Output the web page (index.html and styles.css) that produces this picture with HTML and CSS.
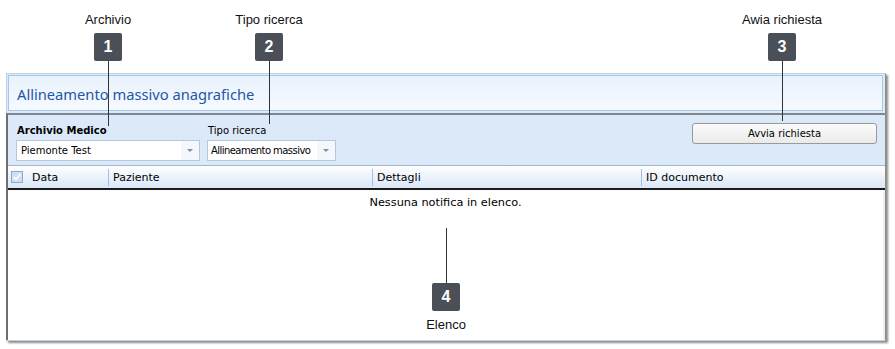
FILE: index.html
```html
<!DOCTYPE html>
<html lang="it">
<head>
    <meta charset="UTF-8">
    <title>Allineamento massivo anagrafiche</title>
    <link rel="stylesheet" href="styles.css">
</head>
<body>
    <div class="stage">
        <!-- Finestra -->
        <div class="window">
            <div class="titlebar">Allineamento massivo anagrafiche</div>
            <div class="panel">
                <!-- Barra filtri -->
                <div class="toolbar">
                    <div class="field field-archivio">
                        <label class="lbl lbl-bold">Archivio Medico</label>
                        <div class="combo">
                            <span class="combo-text">Piemonte Test</span>
                            <span class="combo-arrow"></span>
                        </div>
                    </div>
                    <div class="field field-tipo">
                        <label class="lbl">Tipo ricerca</label>
                        <div class="combo">
                            <span class="combo-text combo-text-tight">Allineamento massivo</span>
                            <span class="combo-arrow"></span>
                        </div>
                    </div>
                    <button class="btn">Avvia richiesta</button>
                </div>
                <!-- Elenco -->
                <div class="grid-head">
                    <div class="col col-check">
                        <svg width="12" height="12" viewBox="0 0 12 12">
                            <rect x="0.5" y="0.5" width="11" height="11" fill="#cfe0f3" stroke="#8fa9c8"/>
                            <path d="M2.5 6 L5 8.5 L9.5 3" fill="none" stroke="#ffffff" stroke-width="1.6"/>
                        </svg>
                    </div>
                    <div class="col col-data">Data</div>
                    <div class="col col-paz">Paziente</div>
                    <div class="col col-det">Dettagli</div>
                    <div class="col col-id">ID documento</div>
                </div>
                <div class="grid-body">
                    <div class="empty">Nessuna notifica in elenco.</div>
                </div>
            </div>
        </div>

        <!-- Richiami numerati -->
        <div class="callout c1"><span class="c-label">Archivio</span><span class="badge">1</span><span class="stem"></span></div>
        <div class="callout c2"><span class="c-label">Tipo ricerca</span><span class="badge">2</span><span class="stem"></span></div>
        <div class="callout c3"><span class="c-label">Awia richiesta</span><span class="badge">3</span><span class="stem"></span></div>
        <div class="callout c4"><span class="stem"></span><span class="badge">4</span><span class="c-label">Elenco</span></div>
    </div>
</body>
</html>
```

FILE: styles.css
```css
/* Pagina */
body {
    margin: 0;
    background: #ffffff;
    font-family: "DejaVu Sans", Tahoma, sans-serif;
}

.stage {
    position: relative;
    width: 895px;
    height: 349px;
    padding-top: 73px;
    box-sizing: border-box;
}

/* Finestra */
.window {
    margin-left: 6px;
    width: 880px;
    height: 268px;
    box-sizing: border-box;
    border: 1px solid #bcd3ec;
    border-right-color: #8c8c8c;
    background: #dfeaf8;
    box-shadow: 2px 2px 2px rgba(0, 0, 0, 0.45);
    display: flex;
    flex-direction: column;
}

.titlebar {
    margin: 1px 2px 1px 1px;
    height: 36px;
    box-sizing: border-box;
    border: 1px solid #a8c6e8;
    background: linear-gradient(#e9f2fc, #f6faff);
    font-family: "Noto Sans", "Open Sans", sans-serif;
    font-size: 14.7px;
    color: #1e56a8;
    padding-left: 8px;
    padding-top: 2px;
    line-height: 33px;
}

.panel {
    flex: 1;
    border-top: 2px solid #7e8791;
    border-left: 2px solid #6f6f6f;
    margin-left: -1px;
    margin-top: 1px;
    display: flex;
    flex-direction: column;
    background: #ffffff;
}

/* Barra filtri */
.toolbar {
    height: 50px;
    background: #dce9f9;
    display: flex;
    align-items: flex-start;
    padding-left: 8px;
    padding-right: 8px;
    font-size: 10px;
    color: #000;
}

.field {
    display: flex;
    flex-direction: column;
    margin-top: 8px;
}

.field-archivio { width: 184px; }
.field-tipo { width: 129px; margin-left: 7px; }

.lbl {
    height: 15px;
    line-height: 15px;
    padding-left: 1px;
}

.lbl-bold { font-weight: bold; }

.combo {
    margin-top: 2px;
    height: 21px;
    box-sizing: border-box;
    background: #fff;
    border: 1px solid #b5c8de;
    display: flex;
    align-items: center;
}

.combo-text {
    flex: 1;
    padding-left: 4px;
    white-space: nowrap;
    overflow: hidden;
}

.combo-text-tight {
    padding-left: 3px;
    letter-spacing: -0.55px;
}

.combo-arrow {
    width: 18px;
    height: 19px;
    position: relative;
    background: #f4f8fd;
}

.combo-arrow::after {
    content: "";
    position: absolute;
    left: 6px;
    top: 8px;
    border-left: 3px solid transparent;
    border-right: 3px solid transparent;
    border-top: 3px solid #7a8ea8;
}

.btn {
    margin-left: auto;
    margin-top: 8px;
    width: 185px;
    height: 21px;
    border: 1px solid #9a9a9a;
    border-radius: 3px;
    background: linear-gradient(#fbfbfb, #eaeaea);
    font-family: "DejaVu Sans", Tahoma, sans-serif;
    font-size: 10px;
    color: #000;
    padding: 0;
}

/* Intestazione elenco */
.grid-head {
    height: 25px;
    box-sizing: border-box;
    background: linear-gradient(#ffffff, #d9e7f8);
    border-top: 1px solid #9fb8d6;
    border-bottom: 2px solid #1b1b1b;
    display: flex;
    align-items: center;
    font-size: 11px;
    color: #000;
}

.col {
    height: 17px;
    line-height: 17px;
    padding-left: 4px;
    box-sizing: border-box;
    white-space: nowrap;
}

.col-check { width: 21px; padding-left: 3px; display: flex; align-items: center; }
.col-data { width: 79px; padding-left: 3px; }
.col-paz { width: 264px; border-left: 1px solid #9fc0e6; }
.col-det { width: 269px; border-left: 1px solid #9fc0e6; }
.col-id { flex: 1; border-left: 1px solid #9fc0e6; }

.grid-body {
    flex: 1;
    background: #fff;
    border-right: 2px solid #f0f0f0;
}

.empty {
    text-align: center;
    font-size: 11.3px;
    padding-top: 6px;
    color: #000;
}

/* Richiami */
.callout {
    position: absolute;
    display: flex;
    flex-direction: column;
    align-items: center;
    width: 120px;
    font-family: "Liberation Sans", Arial, sans-serif;
}

.c-label {
    font-size: 13px;
    line-height: 14px;
    color: #111;
    white-space: nowrap;
}

.badge {
    width: 28px;
    height: 28px;
    border-radius: 2px;
    background: #4b4f57;
    color: #fff;
    font-weight: bold;
    font-size: 16px;
    line-height: 28px;
    text-align: center;
}

.stem {
    width: 1px;
    background: #333;
}

.c1, .c2, .c3 { top: 13px; }
.c1 .badge, .c2 .badge, .c3 .badge { margin-top: 6px; }
.c1 { left: 48px; }
.c2 { left: 209px; }
.c3 { left: 722px; }
.c1 .stem { height: 65px; }
.c2 .stem { height: 63px; }
.c3 .stem { height: 60px; }

.c4 { left: 386px; top: 228px; }
.c4 .stem { height: 55px; }
.c4 .c-label { margin-top: 7px; }
```
